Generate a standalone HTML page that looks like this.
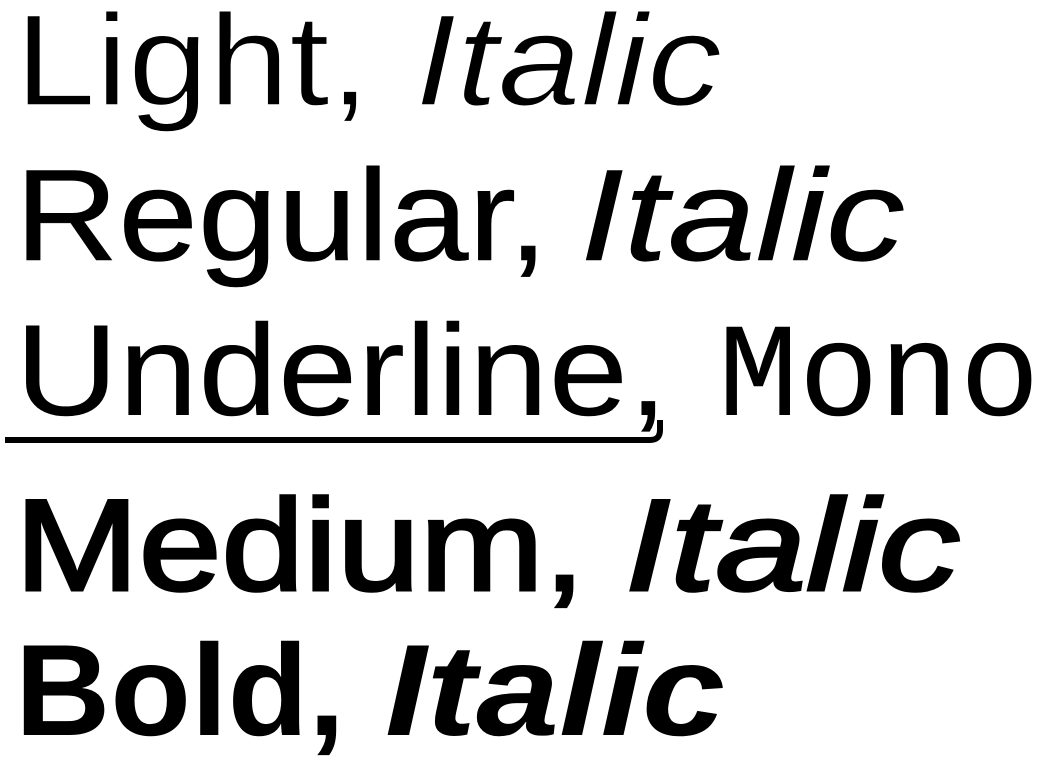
<!DOCTYPE html>
<html><head><style>html,body{margin:0;padding:0;background:#fff;}svg{display:block}</style></head>
<body>
<svg width="1052" height="776" viewBox="0 0 1052 776" xmlns="http://www.w3.org/2000/svg" font-family="Liberation Sans, sans-serif" font-size="130" fill="#000">
<text x="15" y="105" textLength="355" lengthAdjust="spacingAndGlyphs" stroke="#fff" stroke-width="1.5">Light,</text>
<text x="415" y="105" textLength="307" lengthAdjust="spacingAndGlyphs" font-style="italic" stroke="#fff" stroke-width="1.5">Italic</text>
<text x="15" y="260" textLength="533" lengthAdjust="spacingAndGlyphs" stroke="#000" stroke-width="0.6">Regular,</text>
<text x="580" y="260" textLength="325" lengthAdjust="spacingAndGlyphs" font-style="italic" stroke="#000" stroke-width="0.6">Italic</text>
<text x="15" y="415" textLength="653" lengthAdjust="spacingAndGlyphs">Underline,</text>
<text x="718" y="415" textLength="322" lengthAdjust="spacingAndGlyphs" font-family="Liberation Mono, monospace" font-size="134">Mono</text>
<path d="M5 440 H650 Q660 440 660 430 V420" stroke="#000" stroke-width="6" fill="none"/>
<text x="15" y="590" textLength="570" lengthAdjust="spacingAndGlyphs" stroke="#000" stroke-width="3">Medium,</text>
<text x="625" y="590" textLength="335" lengthAdjust="spacingAndGlyphs" font-style="italic" stroke="#000" stroke-width="3">Italic</text>
<text x="15" y="735" textLength="330" lengthAdjust="spacingAndGlyphs" font-weight="bold">Bold,</text>
<text x="385" y="735" textLength="340" lengthAdjust="spacingAndGlyphs" font-weight="bold" font-style="italic">Italic</text>
</svg>
</body></html>
